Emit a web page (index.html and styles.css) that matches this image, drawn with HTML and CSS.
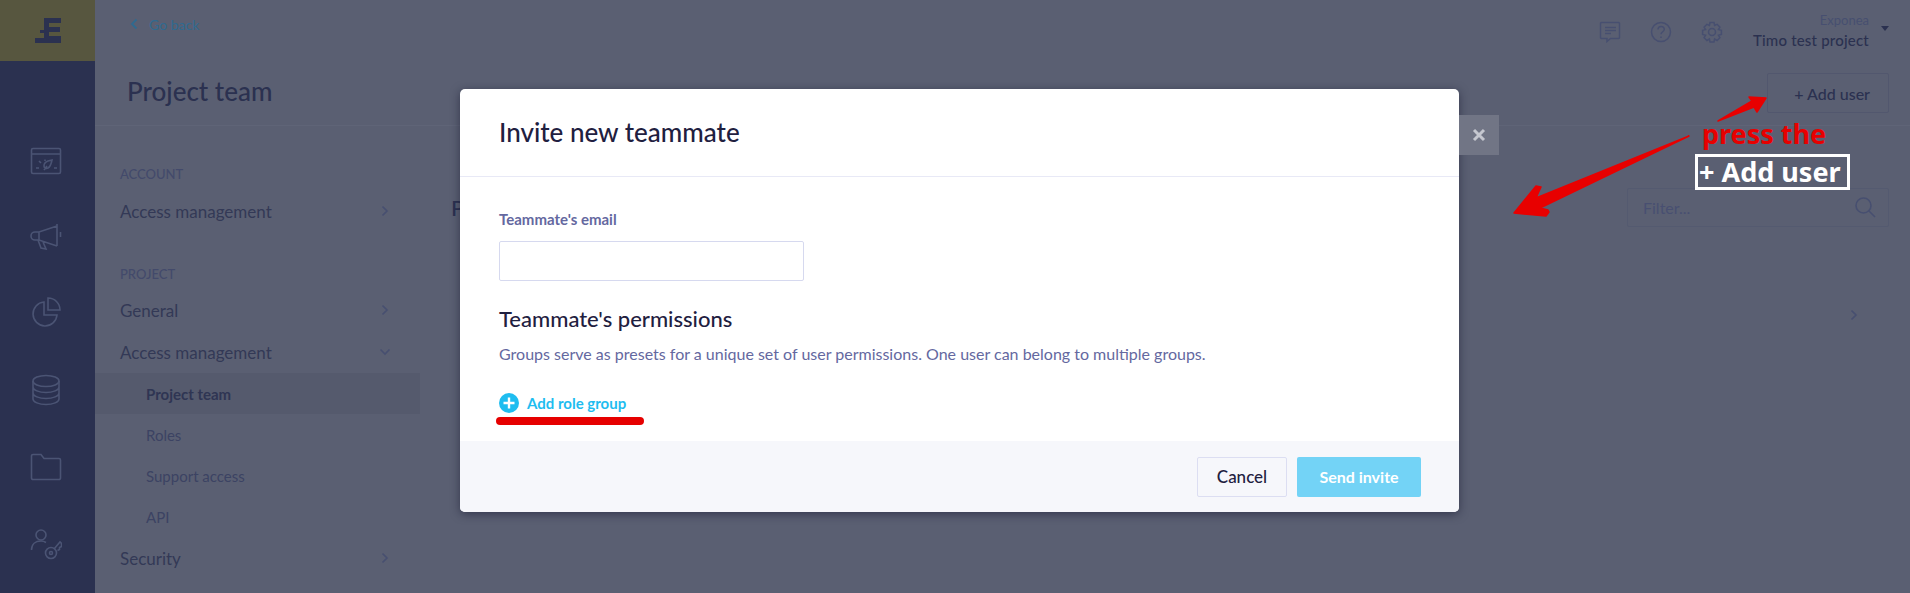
FILE: index.html
```html
<!DOCTYPE html>
<html lang="en">
<head>
<meta charset="utf-8">
<title>Project team</title>
<link rel="stylesheet" href="styles.css">
</head>
<body>
<div class="app">
  <aside class="rail">
    <div class="logo">
      <svg width="26" height="26" viewBox="0 0 26 26"><path class="logo-mark" d="M9 0h17v5H14v4h11v5H14v4h-0v0h12v7H0v-5h9v-5H5v-3h4z"/></svg>
    </div>
    <nav class="rail-nav">
      <svg class="rail-icon" width="32" height="28" viewBox="0 0 32 28"><rect x="1.5" y="1.5" width="29" height="25" rx="1.5"/><path d="M1.5 7h29M6 21h3M24 21h3M9 14l2 2M15 12.500v1.500M22 13l-4 1c-3 1-4 3-4 5 0 2 2 3 4 2 2-1 3-3 4-8zM14 23l3-4"/></svg>
      <svg class="rail-icon" width="32" height="28" viewBox="0 0 32 28"><path d="M27 2v22M27 4L9 10H5a3.500 3.500 0 0 0 0 8h4l18 6M9 10v8M8 18l3 8 5 1-3-7M30.500 10v5"/></svg>
      <svg class="rail-icon" width="32" height="30" viewBox="0 0 32 30"><path d="M14 5a12 12 0 1 0 13 13H14zM18 1a12 12 0 0 1 12 12H18z"/></svg>
      <svg class="rail-icon" width="32" height="32" viewBox="0 0 32 32"><ellipse cx="16" cy="7" rx="13" ry="5.500"/><path d="M3 7v18c0 3 6 5.500 13 5.500S29 28 29 25V7M3 13c0 3 6 5.500 13 5.500S29 16 29 13M3 19c0 3 6 5.500 13 5.500S29 22 29 19"/></svg>
      <svg class="rail-icon" width="32" height="28" viewBox="0 0 32 28"><path d="M3 1.500h8l3 4h15a1.500 1.500 0 0 1 1.500 1.500v18a1.500 1.500 0 0 1-1.500 1.500H3A1.500 1.500 0 0 1 1.500 25V3A1.500 1.500 0 0 1 3 1.500z"/></svg>
      <svg class="rail-icon" width="32" height="32" viewBox="0 0 32 32"><circle cx="11" cy="7" r="5"/><path d="M1.500 22c0-6 4-9 9.500-9 2 0 3.500.5 5 1.500"/><circle cx="21" cy="25" r="5.500"/><circle cx="21" cy="25" r="1.500"/><path d="M24 21l6-7 1.500 1.500v3l-2 1v2l-2 1"/></svg>
    </nav>
  </aside>
  <main class="main">
    <header class="header">
      <div class="header-left">
        <a class="back"><svg class="back-chev" width="8" height="12" viewBox="0 0 8 12"><path d="M6.500 1.500L2 6l4.500 4.500"/></svg>Go back</a>
        <h1 class="page-title">Project team</h1>
      </div>
      <div class="header-right">
        <div class="tools">
          <svg class="tool-icon" width="22" height="22" viewBox="0 0 22 22"><path d="M2.500 1.500h17a1 1 0 0 1 1 1v14a1 1 0 0 1-1 1h-8l-3.500 3v-3H2.500a1 1 0 0 1-1-1v-14a1 1 0 0 1 1-1zM6 6.500h11M6 9.500h11M6 12.500h6"/></svg>
          <svg class="tool-icon" width="22" height="22" viewBox="0 0 22 22"><circle cx="11" cy="11" r="9.500"/><path d="M8 8.500c0-4 6.300-4 6.300-.2 0 2.500-3.300 2.400-3.300 5M11 15.500v1.500"/></svg>
          <svg class="tool-icon" width="22" height="22" viewBox="0 0 22 22"><circle cx="11" cy="11" r="3.500"/><path d="M9 1.500h4l.6 3 2.500-1.200 2.800 2.800-1.500 2.500 3 .8v4l-3 .8 1.500 2.500-2.800 2.800-2.500-1.500-.6 3H9l-.6-3-2.500 1.500-2.800-2.800 1.500-2.500-3-.8v-4l3-.8-1.500-2.500 2.800-2.800 2.500 1.200z"/></svg>
          <div class="project">
            <span class="org">Exponea</span>
            <span class="project-name">Timo test project</span>
          </div>
          <span class="caret"></span>
        </div>
        <button class="add-user">+ Add user</button>
      </div>
    </header>
    <div class="body">
      <nav class="side">
        <div class="side-group">
          <div class="side-heading">ACCOUNT</div>
          <div class="side-item">Access management<svg class="chev" width="8" height="12" viewBox="0 0 8 12"><path d="M1.500 1.500L6 6l-4.500 4.500"/></svg></div>
        </div>
        <div class="side-group">
          <div class="side-heading">PROJECT</div>
          <div class="side-item">General<svg class="chev" width="8" height="12" viewBox="0 0 8 12"><path d="M1.500 1.500L6 6l-4.500 4.500"/></svg></div>
          <div class="side-item">Access management<svg class="chev chev-down" width="12" height="8" viewBox="0 0 12 8"><path d="M1.500 1.500L6 6l4.500-4.500"/></svg></div>
          <div class="side-sub side-sub-active">Project team</div>
          <div class="side-sub">Roles</div>
          <div class="side-sub">Support access</div>
          <div class="side-sub">API</div>
          <div class="side-item">Security<svg class="chev" width="8" height="12" viewBox="0 0 8 12"><path d="M1.500 1.500L6 6l-4.500 4.500"/></svg></div>
        </div>
      </nav>
      <section class="content">
        <div class="content-top">
          <h2 class="content-title">Project team</h2>
          <div class="filter">
            <span class="filter-text">Filter...</span>
            <svg class="search" width="21" height="21" viewBox="0 0 21 21"><circle cx="8.500" cy="8.500" r="7.500"/><path d="M14 14l6 6"/></svg>
          </div>
        </div>
        <div class="content-row"><svg class="chev" width="8" height="12" viewBox="0 0 8 12"><path d="M1.500 1.500L6 6l-4.500 4.500"/></svg></div>
      </section>
    </div>
  </main>

  <div class="modal">
    <div class="modal-head"><h2 class="modal-title">Invite new teammate</h2></div>
    <div class="modal-body">
      <label class="field-label">Teammate's email</label>
      <div class="field-input"></div>
      <h3 class="perm-title">Teammate's permissions</h3>
      <p class="perm-desc">Groups serve as presets for a unique set of user permissions. One user can belong to multiple groups.</p>
      <a class="add-role">
        <svg width="20" height="20" viewBox="0 0 20 20"><circle class="add-role-disc" cx="10" cy="10" r="10"/><path class="add-role-plus" d="M10 4.500v11M4.500 10h11"/></svg>
        Add role group
      </a>
    </div>
    <div class="modal-foot">
      <button class="btn btn-cancel">Cancel</button>
      <button class="btn btn-send">Send invite</button>
    </div>
  </div>
  <div class="modal-close">
    <svg width="14" height="14" viewBox="0 0 14 14"><path d="M2 2l10 10M12 2L2 12"/></svg>
  </div>

  <svg class="annotation-arrows" width="1910" height="593" viewBox="0 0 1910 593">
    <path class="red-fill" d="M1718 121L1752 101 1749 97 1766 98 1757 112 1754 107z"/>
    <path class="red-fill" d="M1689 136L1536 198 1541 187 1536 186 1514 213 1546 216 1549 212 1548 210 1540 208z"/>
    <path class="red-line" d="M500 421L640 421"/>
  </svg>
  <div class="note-press">press the</div>
  <div class="note-add">+ Add user</div>
</div>
</body>
</html>
```

FILE: styles.css
```css
* { box-sizing: border-box; }
html, body { margin: 0; height: 100%; overflow: hidden; }
body { font-family: Lato, "Liberation Sans", sans-serif; background: #5a5f72; color: #2b3150; }
h1, h2, h3, p { margin: 0; font-weight: 500; }

.app { position: relative; display: flex; width: 1910px; height: 593px; overflow: hidden; }

/* rail */
.rail { flex: 0 0 95px; background: #2b3150; display: flex; flex-direction: column; }
.logo { height: 61px; background: #57563f; display: flex; align-items: center; justify-content: center; }
.logo-mark { fill: #2b3150; }
.rail-nav { display: flex; flex-direction: column; align-items: center; padding-top: 86px; gap: 47px; padding-right: 3px; }
.rail-icon { fill: none; stroke: #4b5474; stroke-width: 1.6; }

/* main */
.main { flex: 1; display: flex; flex-direction: column; min-width: 0; }
.header { height: 126px; border-bottom: 1px solid #5f6477; display: flex; justify-content: space-between; }
.header-left { padding: 15px 0 0 32px; }
.back { display: flex; align-items: center; gap: 11px; height: 18px; padding-left: 3px; font-size: 14px; color: #2f6a90; }
.back-chev { fill: none; stroke: #2f6a90; stroke-width: 1.8; }
.page-title { font-size: 26px; line-height: 32px; margin-top: 42px; color: #2b3150; margin-top: 42px; }

.header-right { display: flex; flex-direction: column; align-items: flex-end; padding-right: 21px; }
.tools { display: flex; align-items: center; height: 61px; padding-top: 2px; }
.tool-icon { fill: none; stroke: #474f70; stroke-width: 1.5; margin-right: 29px; }
.project { display: flex; flex-direction: column; align-items: flex-end; margin-left: 1px; }
.org { font-size: 13px; line-height: 17px; color: #474f70; }
.project-name { font-size: 15px; line-height: 22px; font-weight: 500; color: #2b3150; letter-spacing: .2px; }
.caret { width: 0; height: 0; margin: -6px 0 0 12px; border-left: 4.500px solid transparent; border-right: 4.500px solid transparent; border-top: 5px solid #2b3150; }
.add-user { width: 122px; height: 40px; margin-top: 12px; background: transparent; border: 1px solid #52576e; border-radius: 2px; font: 500 16px Lato, sans-serif; color: #2b3150; padding: 0 18px 0 0; text-align: right; }

.body { flex: 1; display: flex; min-height: 0; }

/* side nav */
.side { flex: 0 0 325px; padding-top: 39px; }
.side-group { margin-bottom: 42px; }
.side-heading { padding-left: 25px; font-size: 13px; line-height: 18px; font-weight: 500; color: #434a6b; }
.side-item { display: flex; justify-content: space-between; align-items: center; height: 42px; padding: 0 31px 0 25px; font-size: 17px; color: #333956; margin-top: 0; }
.side-group:first-child .side-item { margin-top: 7px; height: 42px; }
.side-group:last-child .side-heading { margin-top: -9px; margin-bottom: 6px; }
.chev { fill: none; stroke: #474f70; stroke-width: 1.6; flex: none; }
.chev-down { margin-right: -2px; }
.side-sub { height: 41px; display: flex; align-items: center; padding-left: 51px; font-size: 15px; color: #3c4363; }
.side-sub-active { background: #555a6d; font-weight: 700; color: #2f3553; height: 41px; }

/* content */
.content { flex: 1; padding: 62px 21px 0 31px; }
.content-top { display: flex; justify-content: space-between; align-items: center; }
.content-title { font-size: 22px; color: #2b3150; }
.filter { width: 262px; height: 39px; border: 1px solid #545a70; border-radius: 2px; display: flex; align-items: center; justify-content: space-between; padding: 0 12px 0 15px; }
.filter-text { font-size: 16px; color: #484f71; }
.search { fill: none; stroke: #474f70; stroke-width: 1.6; }
.content-row { display: flex; justify-content: flex-end; padding: 82px 31px 0 0; }

/* modal */
.modal { position: absolute; left: 460px; top: 89px; width: 999px; height: 423px; background: #fff; border-radius: 5px; box-shadow: 0 2px 10px rgba(20, 22, 45, .55); display: flex; flex-direction: column; overflow: hidden; }
.modal-head { height: 88px; border-bottom: 1px solid #e8e9f6; padding: 26px 0 0 39px; }
.modal-title { font-size: 26px; line-height: 34px; color: #1f2040; }
.modal-body { flex: 1; padding: 32px 39px 0; }
.field-label { display: block; font-size: 15px; line-height: 20px; font-weight: 700; color: #6468a0; }
.field-input { width: 305px; height: 40px; margin-top: 12px; border: 1px solid #d6d9ef; border-radius: 2px; }
.perm-title { font-size: 22px; line-height: 28px; margin-top: 24px; color: #1f2040; }
.perm-desc { font-size: 16px; line-height: 22px; margin-top: 10px; color: #6468a0; font-weight: 400; }
.add-role { display: flex; align-items: center; gap: 8px; margin-top: 28px; font-size: 15px; font-weight: 700; color: #1fbdf0; }
.add-role-disc { fill: #1fbdf0; }
.add-role-plus { stroke: #fff; stroke-width: 2.4; }
.modal-foot { height: 71px; background: #f6f7fb; display: flex; justify-content: flex-end; align-items: center; gap: 10px; padding: 0 38px 0 0; }
.btn { height: 40px; border-radius: 2px; font: 500 17px Lato, sans-serif; padding: 0; }
.btn-cancel { width: 90px; background: transparent; border: 1px solid #dcdef2; color: #1f2040; }
.btn-send { width: 124px; background: #73d3f6; border: 0; color: #fff; font-weight: 700; font-size: 16px; }

.modal-close { position: absolute; left: 1459px; top: 115px; width: 40px; height: 40px; background: #717585; display: flex; align-items: center; justify-content: center; }
.modal-close path { stroke: #c5c7cf; stroke-width: 3; fill: none; }

/* annotations */
.annotation-arrows { position: absolute; left: 0; top: 0; pointer-events: none; }
.red-fill { fill: #e80000; stroke: #e80000; stroke-width: 1.5; stroke-linejoin: round; }
.red-line { stroke: #e60000; stroke-width: 8; stroke-linecap: round; fill: none; }
.note-press { position: absolute; left: 1702px; top: 114px; font: 700 27px/40px "Noto Sans", sans-serif; color: #e80000; white-space: nowrap; }
.note-add { position: absolute; left: 1695px; top: 154px; width: 155px; height: 36px; border: 3px solid #fff; padding-left: 1px; font: 700 27px/30px "Noto Sans", sans-serif; color: #fff; white-space: nowrap; }
```
